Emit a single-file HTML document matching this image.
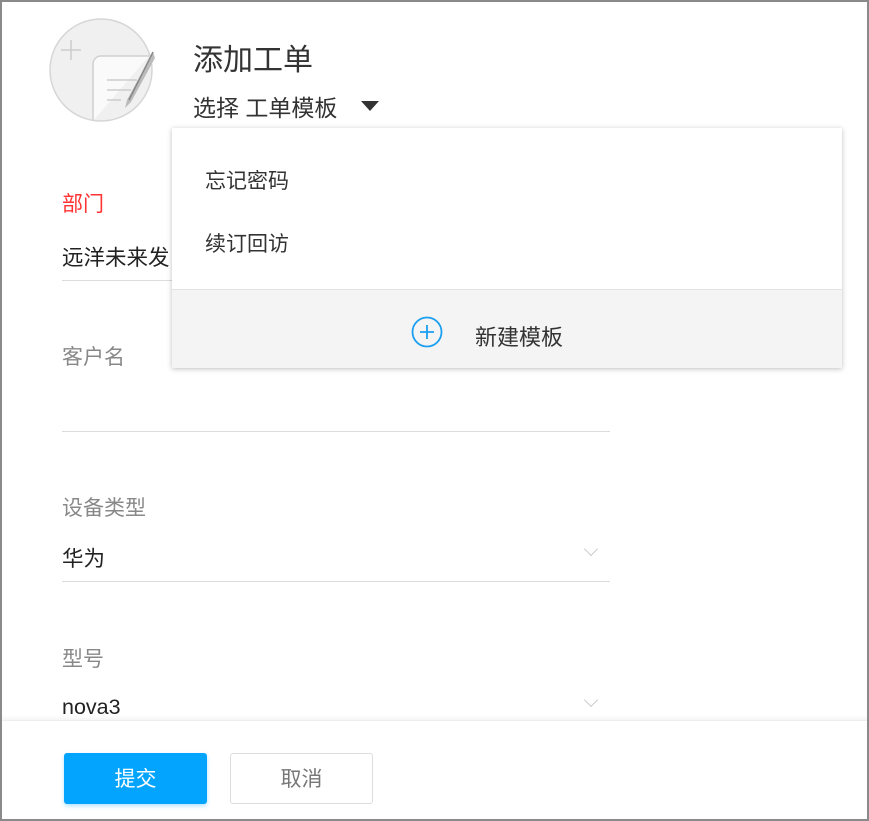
<!DOCTYPE html>
<html><head><meta charset="utf-8"><style>
*{margin:0;padding:0;box-sizing:border-box}
body{width:869px;height:821px;overflow:hidden;background:#fff;font-family:"Liberation Sans","Noto Sans CJK SC",sans-serif;position:relative}
.frame{position:absolute;left:0;top:0;width:869px;height:821px;border:2px solid #8a8a8a}
.abs{position:absolute;white-space:nowrap}
.lbl{font-size:21px;color:#888}
.val{font-size:21.5px;color:#222}
.line{position:absolute;left:62px;width:548px;height:1px;background:#ddd}
.chev{position:absolute;width:10px;height:10px;border-right:1.5px solid #ccc;border-bottom:1.5px solid #ccc;transform:rotate(45deg)}
</style></head><body>
<svg class="abs" style="left:49px;top:18px" width="106" height="106" viewBox="0 0 106 106">
<circle cx="52" cy="52" r="51" fill="#f0f0f0" stroke="#d6d6d6" stroke-width="1.5"/>
<path d="M22 22v20M12 32h20" stroke="#ccc" stroke-width="1.5"/>
<path d="M44 103V46a8 8 0 0 1 8-8h48" fill="#fafafa" stroke="#d0d0d0" stroke-width="1.5"/>
<path d="M58 62h30M58 72h24M58 82h14" stroke="#ccc" stroke-width="1.5"/>
<path d="M104 34L78 82l-2 8 6-6 24-44z" fill="#bbb"/>
<path d="M104 34L80 82" stroke="#888" stroke-width="1.5"/>
</svg>
<div class="abs" style="left:193px;top:35px;font-size:30px;color:#333">添加工单</div>
<div class="abs" style="left:193px;top:89px;font-size:23px;color:#333">选择 工单模板</div>
<svg class="abs" style="left:361px;top:101px" width="18" height="10"><path d="M0 0h18L9 10z" fill="#333"/></svg>

<div class="abs lbl" style="left:62px;top:188px;color:#f33">部门</div>
<div class="abs val" style="left:62px;top:241px">远洋未来发</div>
<div class="line" style="top:280px"></div>
<div class="abs lbl" style="left:62px;top:341px">客户名</div>
<div class="line" style="top:431px"></div>
<div class="abs lbl" style="left:62px;top:492px">设备类型</div>
<div class="abs val" style="left:62px;top:542px">华为</div>
<div class="chev" style="left:586px;top:544px"></div>
<div class="line" style="top:581px"></div>
<div class="abs lbl" style="left:62px;top:643px">型号</div>
<div class="abs val" style="left:62px;top:695px">nova3</div>
<div class="chev" style="left:586px;top:695px"></div>

<div class="abs" style="left:172px;top:128px;width:670px;height:240px;background:#fff;box-shadow:0 1px 5px rgba(0,0,0,.25)">
<div class="abs" style="left:33px;top:37px;font-size:21px;color:#333">忘记密码</div>
<div class="abs" style="left:33px;top:100px;font-size:21px;color:#333">续订回访</div>
<div class="abs" style="left:0;top:161px;width:670px;height:79px;background:#f4f4f4;border-top:1px solid #e2e2e2">
<svg class="abs" style="left:239px;top:26px" width="32" height="32"><circle cx="16" cy="16" r="14.5" fill="none" stroke="#1a9ff0" stroke-width="1.8"/><path d="M16 9v14M9 16h14" stroke="#1a9ff0" stroke-width="1.8"/></svg>
<div class="abs" style="left:303px;top:30px;font-size:22px;color:#333">新建模板</div>
</div></div>

<div class="abs" style="left:0;top:720px;width:869px;height:101px;background:#fff;border-top:1px solid #eee;box-shadow:0 -2px 4px rgba(0,0,0,.05)"></div>
<div class="abs" style="left:64px;top:753px;width:143px;height:51px;background:#03a4fe;border-radius:3px;color:#fff;font-size:21px;text-align:center;line-height:53px;box-shadow:0 2px 4px rgba(3,164,254,.3)">提交</div>
<div class="abs" style="left:230px;top:753px;width:143px;height:51px;background:#fff;border:1px solid #ddd;border-radius:3px;color:#777;font-size:21px;text-align:center;line-height:51px">取消</div>
<div class="frame"></div>
</body></html>
